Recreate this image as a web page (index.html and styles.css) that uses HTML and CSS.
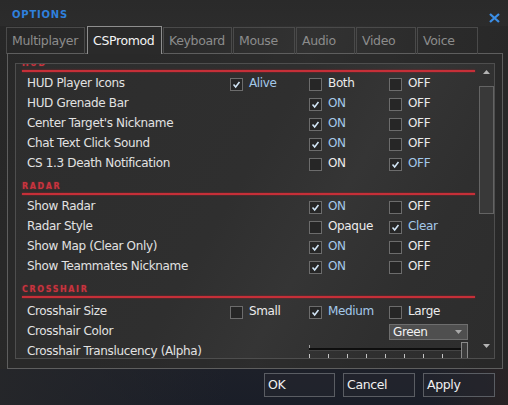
FILE: index.html
```html
<!DOCTYPE html>
<html>
<head>
<meta charset="utf-8">
<link rel="stylesheet" href="styles.css">
</head>
<body>
<div class="window">
  <div class="titlebar">
    <span class="title">OPTIONS</span>
    <svg class="close" width="11" height="10" viewBox="0 0 11 10"><path d="M1 1 L10 9 M10 1 L1 9" /></svg>
  </div>
  <div class="tabs">
    <div class="tab t1">Multiplayer</div>
    <div class="tab t2 active">CSPromod</div>
    <div class="tab t3">Keyboard</div>
    <div class="tab t4">Mouse</div>
    <div class="tab t5">Audio</div>
    <div class="tab t6">Video</div>
    <div class="tab t7">Voice</div>
  </div>
  <div class="panel">
    <div class="list">
      <div class="content">
        <div class="scroller">
          <div class="sec-head"><div class="sec-title">HUD</div><div class="sec-line"></div></div>
          <div class="row"><span class="label">HUD Player Icons</span>
            <span class="opt c1 checked"><span class="cb"><svg viewBox="0 0 13 13"><path d="M3 6.5 L5.5 9.5 L10 3.5"/></svg></span>Alive</span>
            <span class="opt c2"><span class="cb"></span>Both</span>
            <span class="opt c3"><span class="cb"></span>OFF</span></div>
          <div class="row"><span class="label">HUD Grenade Bar</span>
            <span class="opt c2 checked"><span class="cb"><svg viewBox="0 0 13 13"><path d="M3 6.5 L5.5 9.5 L10 3.5"/></svg></span>ON</span>
            <span class="opt c3"><span class="cb"></span>OFF</span></div>
          <div class="row"><span class="label">Center Target's Nickname</span>
            <span class="opt c2 checked"><span class="cb"><svg viewBox="0 0 13 13"><path d="M3 6.5 L5.5 9.5 L10 3.5"/></svg></span>ON</span>
            <span class="opt c3"><span class="cb"></span>OFF</span></div>
          <div class="row"><span class="label">Chat Text Click Sound</span>
            <span class="opt c2 checked"><span class="cb"><svg viewBox="0 0 13 13"><path d="M3 6.5 L5.5 9.5 L10 3.5"/></svg></span>ON</span>
            <span class="opt c3"><span class="cb"></span>OFF</span></div>
          <div class="row"><span class="label">CS 1.3 Death Notification</span>
            <span class="opt c2"><span class="cb"></span>ON</span>
            <span class="opt c3 checked"><span class="cb"><svg viewBox="0 0 13 13"><path d="M3 6.5 L5.5 9.5 L10 3.5"/></svg></span>OFF</span></div>

          <div class="sec-head"><div class="sec-title">RADAR</div><div class="sec-line"></div></div>
          <div class="row"><span class="label">Show Radar</span>
            <span class="opt c2 checked"><span class="cb"><svg viewBox="0 0 13 13"><path d="M3 6.5 L5.5 9.5 L10 3.5"/></svg></span>ON</span>
            <span class="opt c3"><span class="cb"></span>OFF</span></div>
          <div class="row"><span class="label">Radar Style</span>
            <span class="opt c2"><span class="cb"></span>Opaque</span>
            <span class="opt c3 checked"><span class="cb"><svg viewBox="0 0 13 13"><path d="M3 6.5 L5.5 9.5 L10 3.5"/></svg></span>Clear</span></div>
          <div class="row"><span class="label">Show Map (Clear Only)</span>
            <span class="opt c2 checked"><span class="cb"><svg viewBox="0 0 13 13"><path d="M3 6.5 L5.5 9.5 L10 3.5"/></svg></span>ON</span>
            <span class="opt c3"><span class="cb"></span>OFF</span></div>
          <div class="row"><span class="label">Show Teammates Nickname</span>
            <span class="opt c2 checked"><span class="cb"><svg viewBox="0 0 13 13"><path d="M3 6.5 L5.5 9.5 L10 3.5"/></svg></span>ON</span>
            <span class="opt c3"><span class="cb"></span>OFF</span></div>

          <div class="sec-head tall"><div class="sec-title">CROSSHAIR</div><div class="sec-line"></div></div>
          <div class="row"><span class="label">Crosshair Size</span>
            <span class="opt c1"><span class="cb"></span>Small</span>
            <span class="opt c2 checked"><span class="cb"><svg viewBox="0 0 13 13"><path d="M3 6.5 L5.5 9.5 L10 3.5"/></svg></span>Medium</span>
            <span class="opt c3"><span class="cb"></span>Large</span></div>
          <div class="row"><span class="label">Crosshair Color</span>
            <span class="select c3">Green<svg class="sel-arrow" width="7" height="4" viewBox="0 0 7 4"><path d="M0 0 H7 L3.5 4 Z"/></svg></span></div>
          <div class="row"><span class="label">Crosshair Translucency (Alpha)</span>
            <span class="slider">
              <span class="cap"></span>
              <span class="track"></span>
              <span class="ticks"><i></i><i></i><i></i><i></i><i></i><i></i><i></i><i></i><i></i></span>
              <span class="thumb"></span>
            </span></div>
        </div>
      </div>
      <div class="scrollbar">
        <div class="sb-btn"><svg width="7" height="4" viewBox="0 0 7 4"><path d="M0 4 H7 L3.5 0 Z"/></svg></div>
        <div class="sb-thumb"></div>
        <div class="sb-space"></div>
        <div class="sb-btn down"><svg width="7" height="4" viewBox="0 0 7 4"><path d="M0 0 H7 L3.5 4 Z"/></svg></div>
      </div>
    </div>
  </div>
  <div class="buttons">
    <div class="btn b-ok">OK</div>
    <div class="btn b-cancel">Cancel</div>
    <div class="btn b-apply">Apply</div>
  </div>
</div>
</body>
</html>
```

FILE: styles.css
```css
* { box-sizing: border-box; margin: 0; padding: 0; }
html, body { width: 508px; height: 405px; overflow: hidden; }
body {
  background: #1c1f27;
  font-family: "DejaVu Sans", Verdana, sans-serif;
  font-size: 12px;
  letter-spacing: -0.35px;
  color: #e4e4e4;
}
.window {
  width: 508px;
  height: 405px;
  display: flex;
  flex-direction: column;
  background:
    linear-gradient(90deg, rgba(38,39,42,0.9) 0%, rgba(28,32,41,0) 45%, rgba(28,32,41,0) 85%, rgba(44,36,36,0.8) 100%) 0 369px / 100% 36px no-repeat,
    linear-gradient(180deg, #1d2029 0, #1a1e28 100%) 0 369px / 100% 36px no-repeat,
    linear-gradient(100deg, #272727 0%, #2b2b2b 35%, #323232 55%, #2b2b2b 75%, #262626 100%);
}
.titlebar {
  height: 26px;
  display: flex;
  justify-content: space-between;
  align-items: flex-start;
  padding: 10px 8px 0 12px;
  background: linear-gradient(180deg, #2a2a2a 0, #2c2c2c 100%);
}
.title {
  font-size: 10px;
  font-weight: bold;
  letter-spacing: 0.8px;
  line-height: 10px;
  color: #2f80dc;
}
.close { margin-top: 3px; }
.close path { stroke: #3b8ee6; stroke-width: 2.3; fill: none; }

.tabs {
  height: 28px;
  margin-bottom: -1px;
  display: flex;
  align-items: flex-end;
  gap: 1px;
  padding-left: 6px;
  position: relative;
  z-index: 2;
}
.tab {
  height: 27px;
  border: 1px solid #4a4a4a;
  border-bottom: none;
  color: #8c8c8c;
  font-size: 12.5px;
  line-height: 26px;
  padding-left: 5px;
}
.tab.active {
  height: 28px;
  border-color: #8e8e8e;
  color: #f4f4f4;
  background: #2a2a2a;
  line-height: 27px;
}
.t1 { width: 79px; margin-right: 1px; }
.t2 { width: 75px; }
.t3 { width: 69px; }
.t4 { width: 62px; }
.t5 { width: 59px; }
.t6 { width: 60px; }
.t7 { width: 61px; }

.panel {
  margin-left: 7px;
  width: 496px;
  height: 316px;
  border: 1px solid #5e5e5e;
  padding: 9px 7px;
  background: rgba(42,42,42,0.6);
}
.list {
  height: 296px;
  border: 1px solid #4e4e4e;
  display: flex;
  background: linear-gradient(120deg, #2d2d2d 0%, #2f2f2f 45%, #353535 62%, #2f2f2f 80%, #2d2d2d 100%);
}
.content {
  flex: 1;
  overflow: hidden;
}
.scroller { margin-top: -14px; }

.sec-head {
  height: 23px;
  padding: 10px 4px 0 6px;
}
.sec-head.tall { height: 25px; }
.sec-title {
  height: 8px;
  line-height: 8px;
  font-size: 8px;
  font-weight: bold;
  letter-spacing: 1.6px;
  color: #c8343f;
  text-shadow: 0 0 2px rgba(200, 40, 50, 0.5);
  margin-bottom: 2px;
}
.sec-line {
  height: 2px;
  background: #c62f38;
  box-shadow: 0 0 2px rgba(180, 30, 40, 0.8);
}

.row {
  height: 20px;
  display: grid;
  grid-template-columns: 203px 79px 80px 1fr;
  align-items: center;
  padding-left: 11px;
}
.label { grid-column: 1; color: #e2e2e2; white-space: nowrap; }
.c1 { grid-column: 2; }
.c2 { grid-column: 3; }
.c3 { grid-column: 4; }
.opt {
  display: flex;
  align-items: center;
  gap: 6px;
  color: #ececec;
}
.opt.checked { color: #a4c9ea; }
.cb {
  width: 13px;
  height: 13px;
  margin-top: 2px;
  border: 1px solid #6c6c6c;
  background: #262626;
  display: block;
  flex: none;
}
.cb svg { display: block; width: 11px; height: 11px; }
.cb path { stroke: #d2e5f6; stroke-width: 1.8; fill: none; }

.select {
  width: 79px;
  height: 16px;
  margin-top: 1px;
  border: 1px solid #6e6e6e;
  background: #4f4f4f;
  color: #f2f2f2;
  line-height: 14px;
  padding-left: 3px;
  display: flex;
  justify-content: space-between;
  align-items: center;
  padding-right: 5px;
}
.sel-arrow path { fill: #a8a8a8; }

.slider {
  grid-column: 3 / 5;
  position: relative;
  height: 20px;
  align-self: stretch;
}
.slider .cap {
  position: absolute;
  left: 0;
  top: 4px;
  width: 1px;
  height: 4px;
  background: #9a9a9a;
}
.slider .track {
  position: absolute;
  left: 0;
  top: 7px;
  width: 153px;
  height: 3px;
  background: #0e0e0e;
  border-bottom: 1px solid #444;
}
.slider .ticks {
  position: absolute;
  left: 0;
  top: 13px;
  width: 153px;
  display: flex;
  justify-content: space-between;
}
.slider .ticks i {
  display: block;
  width: 1px;
  height: 4px;
  background: #c4c4c4;
}
.slider .thumb {
  position: absolute;
  left: 152px;
  top: 1px;
  width: 7px;
  height: 19px;
  border: 1px solid #8a8a8a;
  background: #3b3b3b;
}

.scrollbar {
  width: 15px;
  display: flex;
  flex-direction: column;
}
.sb-btn {
  height: 21px;
  display: flex;
  justify-content: center;
  padding-top: 6px;
}
.sb-btn.down { height: 20px; padding-top: 6px; }
.sb-btn path { fill: #b4b4b4; }
.sb-thumb {
  height: 128px;
  margin-top: 1px;
  border: 1px solid #646464;
  background: #393939;
}
.sb-space { flex: 1; }

.buttons {
  margin-top: 4px;
  display: flex;
  justify-content: flex-end;
  gap: 8px;
  padding-right: 13px;
}
.btn {
  height: 24px;
  border: 1px solid #5a5d63;
  background: rgba(36, 39, 46, 0.6);
  color: #f0f0f0;
  font-size: 12.5px;
  line-height: 22px;
  padding-left: 3px;
}
.b-ok { width: 71px; }
.b-cancel { width: 72px; }
.b-apply { width: 72px; }
```
